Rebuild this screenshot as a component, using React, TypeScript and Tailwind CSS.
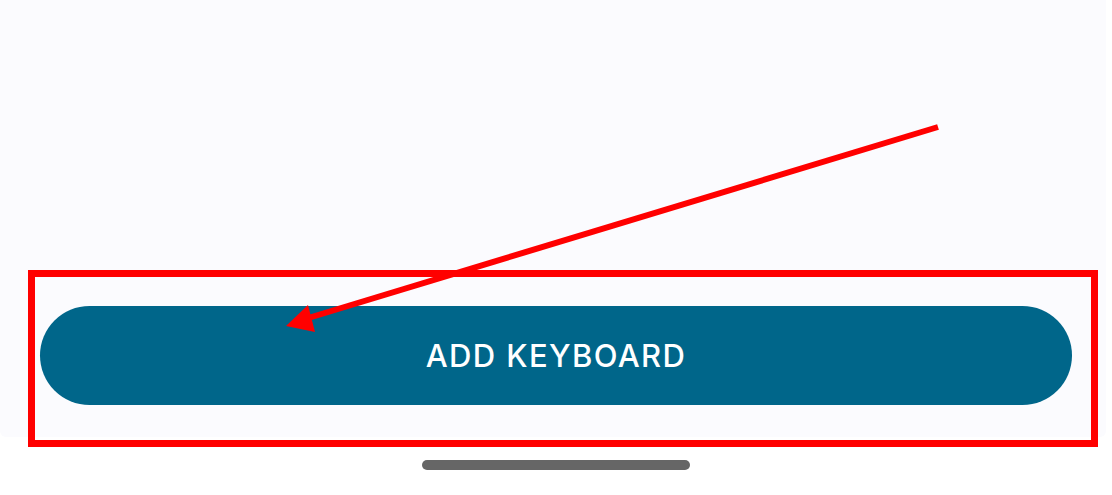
export default function App() {
  return (
    <div className="relative w-[1112px] h-[495px] bg-white overflow-hidden font-['Roboto','Liberation_Sans',sans-serif]">
      <div className="flex flex-col h-[437px] bg-[#fbfbfe] rounded-b-[6px] px-10 justify-end pb-8 mr-[6px]">
        <button className="h-[99px] w-[1032px] rounded-full bg-[#00668a] text-white font-['Inter',sans-serif] text-[31px] font-medium tracking-[0.045em] flex items-center justify-center pt-[2px]">
          ADD KEYBOARD
        </button>
      </div>
      <div className="flex justify-center pt-[23px]">
        <div className="w-[268px] h-[10px] rounded-full bg-[#666666]" />
      </div>

      {/* annotation overlay */}
      <div className="absolute left-[28px] top-[270px] w-[1070px] h-[177px] border-[7px] border-[#ff0000]" />
      <svg className="absolute inset-0" width="1112" height="495" viewBox="0 0 1112 495">
        <line x1="938" y1="127" x2="305" y2="319" stroke="#ff0000" strokeWidth="6" />
        <polygon points="286,326 308,305 315,332" fill="#ff0000" />
      </svg>
    </div>
  );
}
